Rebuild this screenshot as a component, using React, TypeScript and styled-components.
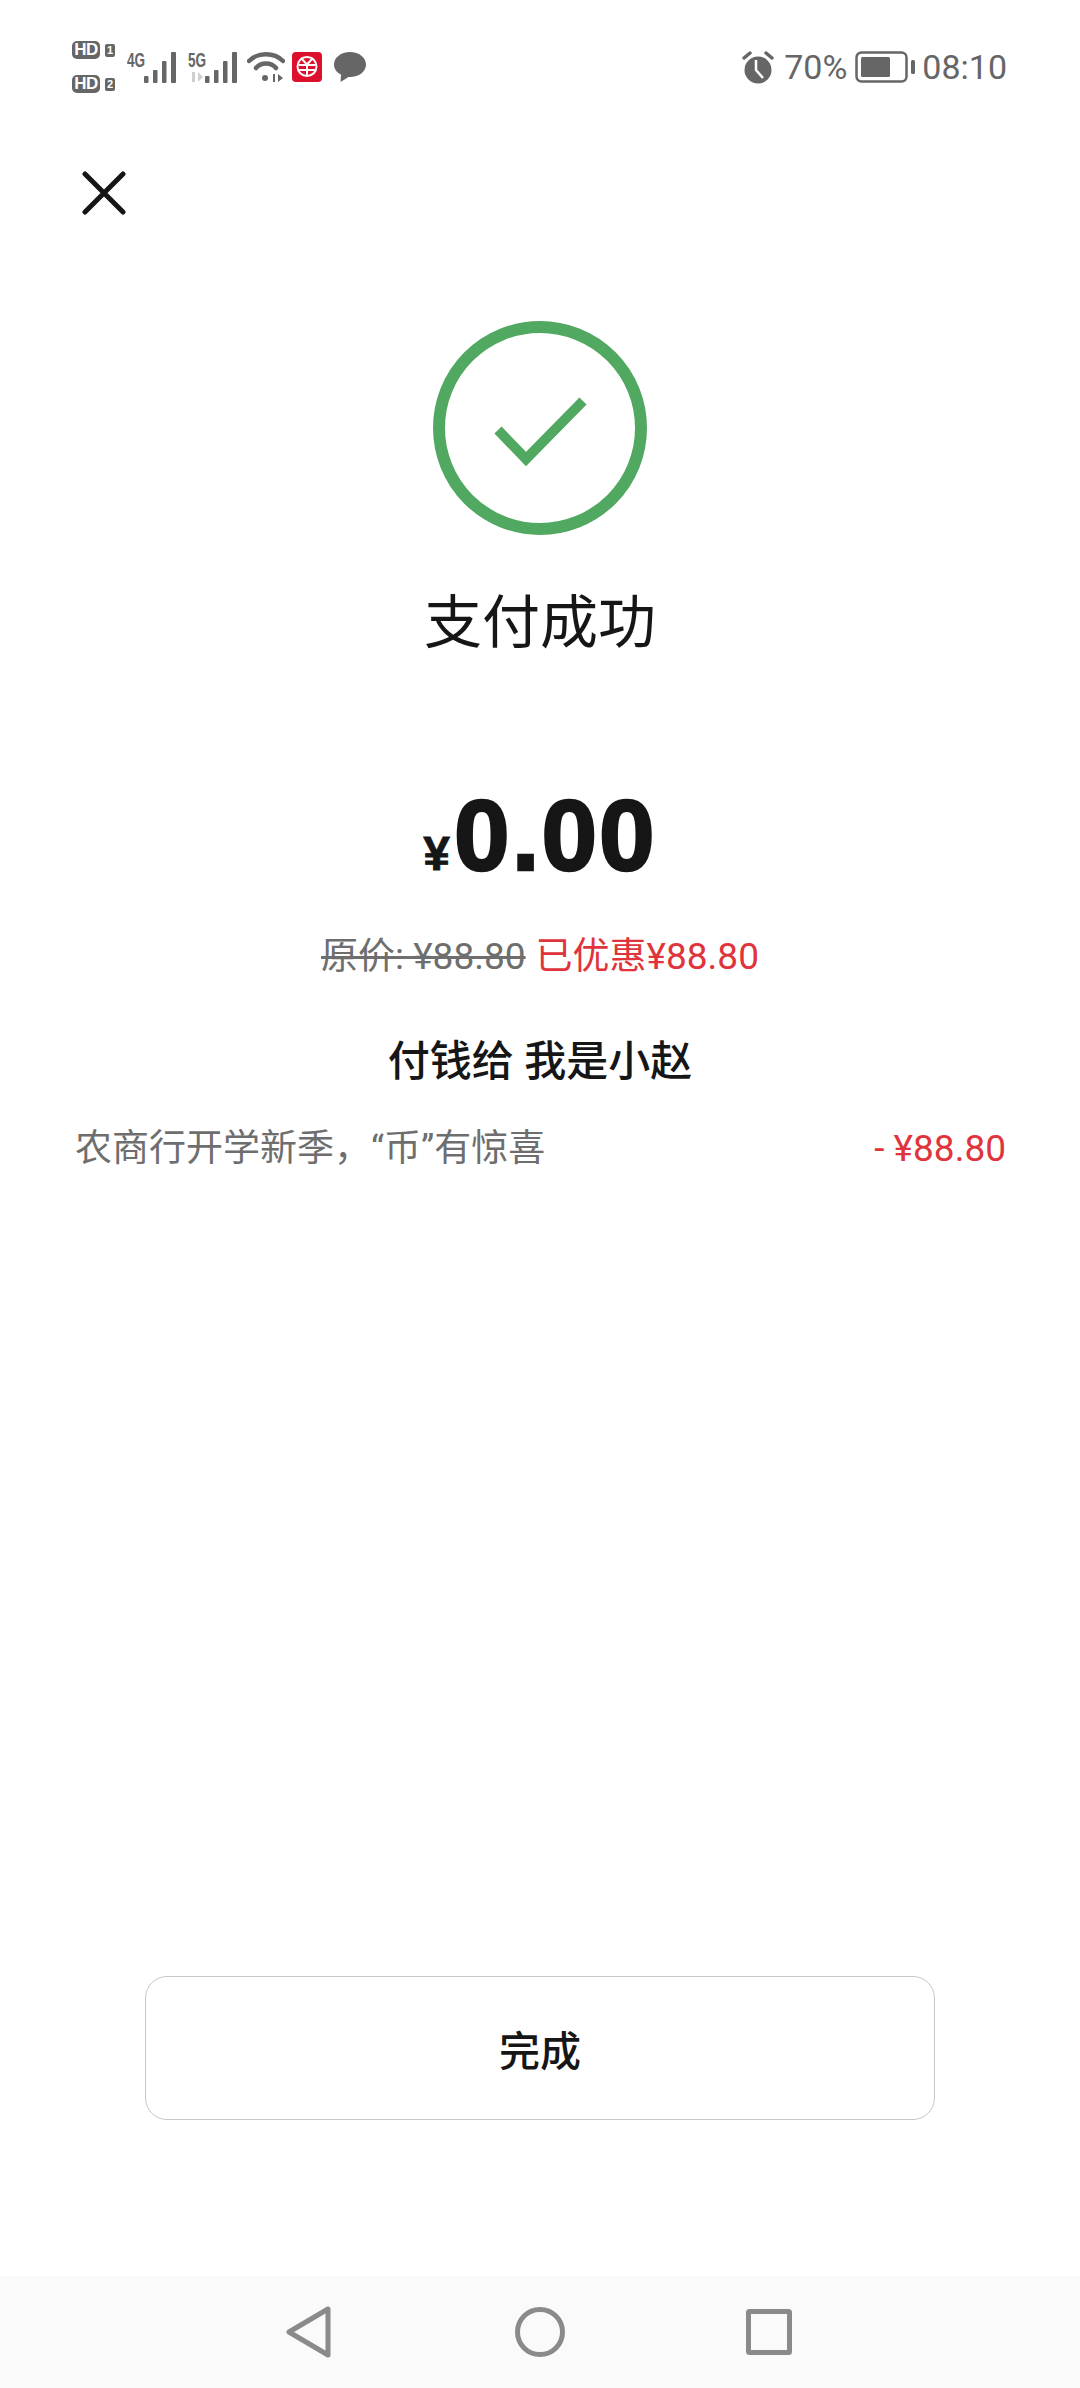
import React from 'react'
import styled, { createGlobalStyle } from 'styled-components'

const GlobalStyle = createGlobalStyle`
  html, body {
    margin: 0;
    padding: 0;
    background: #fff;
  }
`

const FONT = `Roboto, "Noto Sans CJK SC", sans-serif`

const Page = styled.div`
  width: 1080px;
  height: 2388px;
  display: flex;
  flex-direction: column;
  align-items: center;
  background: #fff;
  font-family: ${FONT};
  overflow: hidden;
`

// 状态栏
const StatusBar = styled.div`
  width: 100%;
  height: 134px;
  box-sizing: border-box;
  padding: 0 73px 0 72px;
  display: flex;
  align-items: center;
  justify-content: space-between;
  color: #666;
`

const StatusGroup = styled.div`
  display: flex;
  align-items: center;
`

const StatusText = styled.span<{ $left: number; $right?: number }>`
  font-size: 34px;
  line-height: 40px;
  margin-left: ${(p) => p.$left}px;
  margin-right: ${(p) => p.$right ?? 0}px;
`

const Sims = styled.div`
  display: flex;
  flex-direction: column;
  gap: 16px;
`

const SimRow = styled.div`
  display: flex;
  align-items: center;
  gap: 5px;
`

const HdPill = styled.span`
  width: 28px;
  height: 18px;
  border-radius: 5px;
  background: #666;
  color: #fff;
  font: 700 17px/18px "Liberation Sans", sans-serif;
  text-align: center;
  letter-spacing: -0.5px;
`

const SimNo = styled.span`
  width: 10px;
  height: 13px;
  border-radius: 2px;
  background: #666;
  color: #fff;
  font: 700 11px/13px "Liberation Sans", sans-serif;
  text-align: center;
`

const Network = styled.div<{ $left: number }>`
  position: relative;
  display: flex;
  align-items: flex-end;
  height: 32px;
  margin-left: ${(p) => p.$left}px;
`

const NetLabel = styled.span`
  position: relative;
  top: -13px;
  width: 17px;
  font: 700 20px/20px "Liberation Sans", sans-serif;
  color: #666;
  transform: scaleX(0.68);
  transform-origin: left center;
  white-space: nowrap;
`

const TransferArrows = styled.svg`
  position: absolute;
  left: 1px;
  top: 21px;
`

const IconSlot = styled.svg<{ $left?: number }>`
  display: block;
  flex: none;
  margin-left: ${(p) => p.$left ?? 0}px;
`

const CloseRow = styled.div`
  width: 100%;
  box-sizing: border-box;
  padding: 37px 0 0 82px;
`

const Success = styled.svg`
  display: block;
  margin-top: 106px;
`

const Title = styled.h1`
  margin: 42px 0 0;
  font-size: 58px;
  font-weight: 400;
  line-height: 92px;
  color: #161616;
`

const Amount = styled.div`
  margin-top: 111px;
  height: 110px;
  display: flex;
  align-items: baseline;
  justify-content: center;
  gap: 4px;
  color: #161616;
  font-family: "Liberation Sans", sans-serif;
  font-weight: 700;
  line-height: 110px;
`

const Currency = styled.span`
  font-size: 48px;
  -webkit-text-stroke: 0.8px #161616;
`

const Figure = styled.span`
  font-size: 100px;
  letter-spacing: 2px;
  -webkit-text-stroke: 2.5px #161616;
`

const PriceLine = styled.div`
  margin-top: 42px;
  display: flex;
  gap: 10px;
  font-size: 37px;
  line-height: 50px;
`

const OldPrice = styled.span`
  color: #6e6e6e;
  text-decoration: line-through;
`

const Saved = styled.span`
  color: #e0343c;
`

const Payee = styled.div`
  margin-top: 52px;
  font-size: 42px;
  font-weight: 500;
  line-height: 56px;
  color: #161616;
`

const DiscountRow = styled.div`
  width: 100%;
  box-sizing: border-box;
  margin-top: 34px;
  padding: 0 74px 0 75px;
  display: flex;
  justify-content: space-between;
  font-size: 37px;
  line-height: 50px;
`

const DiscountName = styled.span`
  color: #6e6e6e;
`

const DiscountValue = styled.span`
  color: #e0343c;
`

const Spacer = styled.div`
  flex: 1;
`

const DoneButton = styled.button`
  width: 790px;
  height: 144px;
  flex: none;
  box-sizing: border-box;
  border: 1px solid #c8c8c8;
  border-radius: 22px;
  background: #fff;
  color: #161616;
  font-family: ${FONT};
  font-size: 41px;
  font-weight: 500;
`

// 底部导航栏
const NavBar = styled.div`
  width: 100%;
  height: 112px;
  margin-top: 156px;
  flex: none;
  box-sizing: border-box;
  padding-right: 2px;
  display: flex;
  align-items: center;
  justify-content: center;
  background: #fafafa;
`

const SignalBars: React.FC = () => (
  <IconSlot width="33" height="31" viewBox="0 0 33 31" fill="#666">
    <rect x="0" y="24" width="4.500" height="7" rx="1" />
    <rect x="9" y="18" width="4.500" height="13" rx="1" />
    <rect x="18" y="9" width="4.500" height="22" rx="1" />
    <rect x="27" y="0" width="5" height="31" rx="1" />
  </IconSlot>
)

const App: React.FC = () => (
  <Page>
    <GlobalStyle />
    <StatusBar>
      <StatusGroup>
        <Sims>
          <SimRow>
            <HdPill>HD</HdPill>
            <SimNo>1</SimNo>
          </SimRow>
          <SimRow>
            <HdPill>HD</HdPill>
            <SimNo>2</SimNo>
          </SimRow>
        </Sims>
        <Network $left={12}>
          <NetLabel>4G</NetLabel>
          <SignalBars />
        </Network>
        <Network $left={11}>
          <NetLabel>5G</NetLabel>
          <TransferArrows width="15" height="10" viewBox="0 0 15 10" fill="#cfcfcf">
            <rect x="3" y="0" width="3" height="10" />
            <path d="M9 0L14 5L9 10Z" />
          </TransferArrows>
          <SignalBars />
        </Network>
        {/* wifi */}
        <IconSlot $left={9} width="38" height="32" viewBox="0 0 38 32" fill="none" stroke="#666" strokeWidth="4.500" strokeLinecap="round">
          <path d="M2 10C11 1 27 1 36 10" />
          <path d="M9 17C14 11 24 11 29 17" />
          <circle cx="18" cy="27" r="3" fill="#666" stroke="none" />
          <path d="M27 23v8" strokeWidth="2" strokeLinecap="butt" />
          <path d="M31 23l5 4-5 4z" fill="#666" stroke="none" />
        </IconSlot>
        {/* 数字人民币图标 */}
        <IconSlot $left={7} width="30" height="30" viewBox="0 0 30 30">
          <rect width="30" height="30" rx="4" fill="#dc0f2c" />
          <g fill="none" stroke="#fff" strokeWidth="2">
            <circle cx="15" cy="14.500" r="9.500" />
            <path d="M9 6l6 6.500L21 6M7 13h16M7 18h16M15 12v12" />
          </g>
        </IconSlot>
        {/* 消息气泡 */}
        <IconSlot $left={12} width="32" height="30" viewBox="0 0 32 30" fill="#666">
          <path d="M16 0C7 0 0 5.500 0 12.500C0 17 2.800 20.500 7 22.600L6.500 30L14.500 25C15 25 15.500 25 16 25C25 25 32 19.500 32 12.500C32 5.500 25 0 16 0Z" />
        </IconSlot>
      </StatusGroup>
      <StatusGroup>
        {/* 闹钟 */}
        <IconSlot width="32" height="33" viewBox="0 0 32 33">
          <circle cx="16" cy="19" r="13.500" fill="#666" />
          <path d="M14 9v10l7 8" fill="none" stroke="#fff" strokeWidth="2.500" />
          <path d="M2 7L8 2M30 7L24 2" fill="none" stroke="#666" strokeWidth="3.500" strokeLinecap="round" />
        </IconSlot>
        <StatusText $left={10} $right={8}>70%</StatusText>
        {/* 电池 */}
        <IconSlot width="60" height="32" viewBox="0 0 60 32">
          <rect x="1.500" y="1.500" width="50" height="29" rx="5" fill="none" stroke="#666" strokeWidth="2.500" />
          <rect x="6" y="6" width="29" height="20" rx="1.500" fill="#666" />
          <rect x="56" y="9" width="4" height="14" rx="1.500" fill="#666" />
        </IconSlot>
        <StatusText $left={7}>08:10</StatusText>
      </StatusGroup>
    </StatusBar>

    <CloseRow>
      <IconSlot width="44" height="44" viewBox="0 0 44 44" stroke="#161616" strokeWidth="5" strokeLinecap="round">
        <path d="M3 3L41 41M41 3L3 41" />
      </IconSlot>
    </CloseRow>

    <Success width="214" height="214" viewBox="0 0 214 214" fill="none" stroke="#51a861">
      <circle cx="107" cy="107" r="101" strokeWidth="12" />
      <path d="M65 109L93 138L150 80" strokeWidth="10" />
    </Success>

    <Title>支付成功</Title>

    <Amount>
      <Currency>¥</Currency>
      <Figure>0.00</Figure>
    </Amount>

    <PriceLine>
      <OldPrice>原价: ¥88.80</OldPrice>
      <Saved>已优惠¥88.80</Saved>
    </PriceLine>

    <Payee>付钱给 我是小赵</Payee>

    <DiscountRow>
      <DiscountName>农商行开学新季，“币”有惊喜</DiscountName>
      <DiscountValue>- ¥88.80</DiscountValue>
    </DiscountRow>

    <Spacer />

    <DoneButton>完成</DoneButton>

    <NavBar>
      <IconSlot width="46" height="52" viewBox="0 0 46 52" fill="none" stroke="#8a8a8a" strokeWidth="5" strokeLinejoin="round">
        <path d="M42 3V49L3 26Z" />
      </IconSlot>
      <IconSlot $left={183} width="50" height="50" viewBox="0 0 50 50" fill="none" stroke="#8a8a8a" strokeWidth="5">
        <circle cx="25" cy="25" r="22.500" />
      </IconSlot>
      <IconSlot $left={181} width="46" height="46" viewBox="0 0 46 46" fill="none" stroke="#8a8a8a" strokeWidth="5" strokeLinejoin="round">
        <rect x="2.500" y="2.500" width="41" height="41" rx="1" />
      </IconSlot>
    </NavBar>
  </Page>
)

export default App
